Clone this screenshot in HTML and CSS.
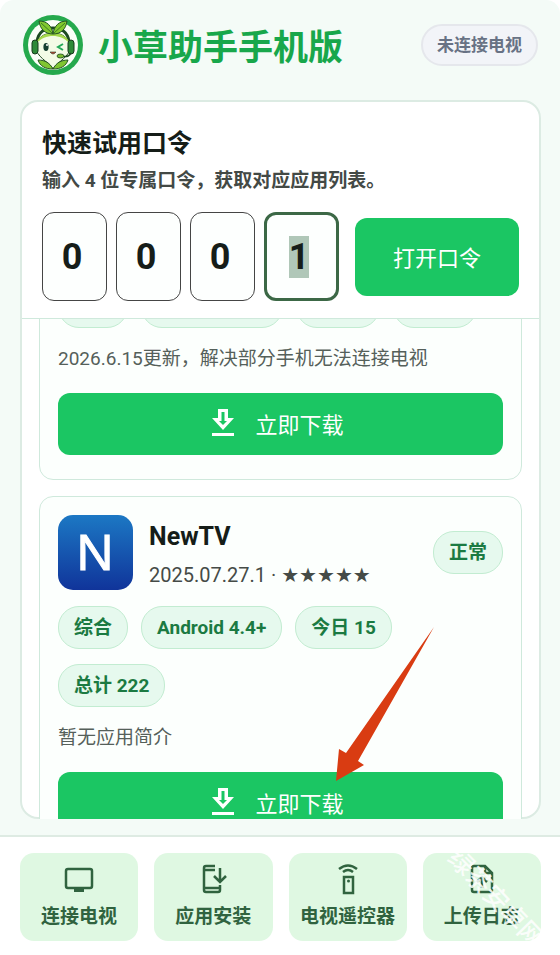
FILE: index.html
```html
<!DOCTYPE html>
<html lang="zh-CN">
<head>
    <meta charset="UTF-8">
    <meta name="viewport" content="width=device-width, initial-scale=1.0">
    <title>小草助手手机版</title>
    <link rel="stylesheet" href="styles.css">
    <script>
    document.addEventListener('DOMContentLoaded', function() {
        var activeInput = document.getElementById('code4');
        activeInput.focus();
        activeInput.select();
    });
    </script>
</head>
<body>
    <div class="app">
        <header class="topbar">
            <svg class="logo" viewBox="0 0 60 60" aria-hidden="true">
                <circle cx="30" cy="30" r="30" fill="#25a94d"/>
                <circle cx="30" cy="30" r="25" fill="#fbfff8"/>
                <path d="M14 27C15 17 22 13 30 13s15 4 16 14" fill="none" stroke="#1d4a22" stroke-width="3"/>
                <path d="M30 18C20 18 13 24 13 32c0 10 12 14 17 22 5-8 17-12 17-22 0-8-7-14-17-14z" fill="#f3fbe6" stroke="#234d23" stroke-width="1"/>
                <path d="M30 18c-9 0-15 4-17 11 5-6 11-8 17-8s12 2 17 8c-2-7-8-11-17-11z" fill="#a5d84d"/>
                <rect x="9" y="25" width="6" height="14" rx="3" fill="#2e8a38" stroke="#173b1d"/>
                <rect x="45" y="25" width="6" height="14" rx="3" fill="#2e8a38" stroke="#173b1d"/>
                <path d="M30 19C29 11 24 6 16 6c1 8 6 13 14 13z" fill="#82c92f" stroke="#245323"/>
                <path d="M30 19C31 11 36 6 44 6c-1 8-6 13-14 13z" fill="#82c92f" stroke="#245323"/>
                <path d="M18 8l11 10M42 8L31 18" stroke="#3c7c24" stroke-width="1"/>
                <path d="M30 54c-3-6-8-9-15-9 2 6 7 9 15 9zM30 54c3-6 8-9 15-9-2 6-7 9-15 9z" fill="#80c532" stroke="#245323"/>
                <ellipse cx="23" cy="32" rx="2.6" ry="4" fill="#153e30"/>
                <circle cx="24" cy="30" r="1" fill="#fff"/>
                <path d="M40 29l-5 3 5 3" fill="none" stroke="#24a858" stroke-width="2"/>
                <path d="M27 37q3 4 6 0z" fill="#bf4b3a" stroke="#253b25" stroke-width=".6"/>
                <path d="M48 38q-3 5-9 3" fill="none" stroke="#1d4a22" stroke-width="1.5"/>
                <ellipse cx="37.500" cy="41" rx="3.500" ry="2" fill="#79bb30" stroke="#1d4a22" stroke-width=".8"/>
            </svg>
            <h1>小草助手手机版</h1>
            <span class="tv-status">未连接电视</span>
        </header>

        <main class="panel">
            <form class="code-form">
                <h2>快速试用口令</h2>
                <p>输入 4 位专属口令，获取对应应用列表。</p>
                <div class="code-row">
                    <input type="text" class="code-input" inputmode="numeric" maxlength="1" value="0" aria-label="口令第 1 位">
                    <input type="text" class="code-input" inputmode="numeric" maxlength="1" value="0" aria-label="口令第 2 位">
                    <input type="text" class="code-input" inputmode="numeric" maxlength="1" value="0" aria-label="口令第 3 位">
                    <input type="text" class="code-input active" id="code4" inputmode="numeric" maxlength="1" value="1" aria-label="口令第 4 位">
                    <button type="button" class="btn open-btn">打开口令</button>
                </div>
            </form>

            <div class="app-list">
                <article class="app-card scrolled">
                    <div class="tags">
                        <span class="tag"></span>
                        <span class="tag"></span>
                        <span class="tag"></span>
                        <span class="tag"></span>
                    </div>
                    <p class="desc">2026.6.15更新，解决部分手机无法连接电视</p>
                    <button type="button" class="btn download-btn">
                        <svg viewBox="0 0 24 28" aria-hidden="true"><path fill-rule="evenodd" d="M7 0h10v9h6L12 21 1 9h6zM10.500 3v9H8l4 4 4-4h-2.500V3zM1 24h22v3H1z"/></svg>
                        立即下载
                    </button>
                </article>

                <article class="app-card">
                    <div class="app-head">
                        <svg class="app-icon" viewBox="0 0 75 75" aria-hidden="true">
                            <defs>
                                <linearGradient id="iconBg" x1="0" y1="0" x2="0" y2="1">
                                    <stop offset="0" stop-color="#1c78c4"/>
                                    <stop offset="1" stop-color="#10349a"/>
                                </linearGradient>
                            </defs>
                            <rect width="75" height="75" rx="15" fill="url(#iconBg)"/>
                            <text class="icon-letter" x="37" y="55">N</text>
                        </svg>
                        <div class="app-info">
                            <h3>NewTV</h3>
                            <p>2025.07.27.1 · <span class="stars">★★★★★</span></p>
                        </div>
                        <span class="tag">正常</span>
                    </div>
                    <div class="tags">
                        <span class="tag">综合</span>
                        <span class="tag">Android 4.4+</span>
                        <span class="tag">今日 15</span>
                        <span class="tag">总计 222</span>
                    </div>
                    <p class="desc">暂无应用简介</p>
                    <button type="button" class="btn download-btn">
                        <svg viewBox="0 0 24 28" aria-hidden="true"><path fill-rule="evenodd" d="M7 0h10v9h6L12 21 1 9h6zM10.500 3v9H8l4 4 4-4h-2.500V3zM1 24h22v3H1z"/></svg>
                        立即下载
                    </button>
                </article>
            </div>
        </main>

        <nav class="bottom-nav">
            <button type="button" class="nav-btn">
                <svg viewBox="0 0 32 32" aria-hidden="true">
                    <rect x="3" y="6" width="26" height="19" rx="2"/>
                    <path class="solid" d="M11 25h10v4H11z"/>
                </svg>
                连接电视
            </button>
            <button type="button" class="nav-btn">
                <svg viewBox="0 0 32 32" aria-hidden="true">
                    <path d="M18 3H9a2 2 0 0 0-2 2v22a2 2 0 0 0 2 2h12a2 2 0 0 0 2-2v-5M7 7h11M7 25h16M23 5v13M17 13l6 6 6-6"/>
                </svg>
                应用安装
            </button>
            <button type="button" class="nav-btn">
                <svg viewBox="0 0 32 32" aria-hidden="true">
                    <rect x="12" y="14" width="9" height="16"/>
                    <path d="M7 6q9-7 18 0M11 9q5-4 10 0"/>
                    <circle class="solid" cx="16.500" cy="18" r="1.500"/>
                </svg>
                电视遥控器
            </button>
            <button type="button" class="nav-btn">
                <svg viewBox="0 0 32 32" aria-hidden="true">
                    <path d="M19 3H8a2 2 0 0 0-2 2v22a2 2 0 0 0 2 2h16a2 2 0 0 0 2-2V10zM19 3v7h7M16 25V14M11 19l5-5 5 5"/>
                </svg>
                上传日志
            </button>
            <span class="watermark">绿茶安卓网</span>
        </nav>

        <svg class="pointer" viewBox="0 0 100 156" aria-hidden="true">
            <path d="M99 1L11 127 4 123 1 155 29 139 23 135z"/>
        </svg>
    </div>
</body>
</html>
```

FILE: styles.css
```css
* {
    margin: 0;
    padding: 0;
    box-sizing: border-box;
}

body, button, input {
    font-family: Roboto, 'Noto Sans CJK SC', sans-serif;
}

body {
    background-color: #fff;
    color: #151d18;
}

.app {
    position: relative;
    display: flex;
    flex-direction: column;
    height: 100vh;
    overflow: hidden;
    background-color: #f4fbf7;
    border-radius: 14px 14px 0 0;
}

/* top bar */
.topbar {
    display: flex;
    align-items: center;
    gap: 15px;
    padding: 15px 22px 25px 23px;
}

.logo {
    width: 60px;
    height: 60px;
}

h1 {
    flex: 1;
    padding-top: 8px;
    font-size: 35px;
    line-height: 40px;
    font-weight: 700;
    color: #18a74b;
}

.tv-status {
    padding: 0 14px;
    border: 2px solid #e5e7ec;
    border-radius: 21px;
    background-color: #f2f4f8;
    color: #687284;
    font-size: 17px;
    line-height: 38px;
    font-weight: 700;
}

/* main panel */
.panel {
    flex: 1;
    min-height: 0;
    display: flex;
    flex-direction: column;
    margin: 0 19px 16px 20px;
    background-color: #fff;
    border: 2px solid #dcebe3;
    border-radius: 18px;
}

.code-form {
    padding: 23px 20px 17px;
    border-bottom: 1px solid #cfe9dc;
}

h2 {
    font-size: 25px;
    line-height: 38px;
    font-weight: 700;
}

.code-form p {
    margin-bottom: 13px;
    color: #434945;
    font-size: 19px;
    line-height: 36px;
    font-weight: 700;
}

.code-row {
    display: flex;
    align-items: center;
    gap: 9px;
}

.code-input {
    width: 65px;
    height: 89px;
    padding-right: 5px;
    border: 1px solid #454545;
    border-radius: 12px;
    background-color: #fdfffe;
    color: #161d19;
    font-size: 36px;
    font-weight: 700;
    text-align: center;
    outline: none;
    caret-color: transparent;
}

.code-input.active {
    width: 75px;
    border: 3px solid #3c6846;
}

.code-input::selection {
    background-color: #b0c7b8;
    color: #161d19;
}

.btn {
    padding-bottom: 2px;
    border: none;
    border-radius: 12px;
    background-color: #1bc663;
    color: #fff;
    font-size: 22px;
    font-weight: 400;
    cursor: pointer;
}

.open-btn {
    flex: 1;
    height: 78px;
    margin-left: 7px;
}

/* app list */
.app-list {
    flex: 1;
    min-height: 0;
    display: flex;
    flex-direction: column;
    gap: 16px;
    margin-bottom: -2px;
    padding: 0 17px;
    overflow: hidden;
}

.app-card {
    flex-shrink: 0;
    padding: 18px 18px 24px;
    border: 1px solid #cfe9dc;
    border-radius: 14px;
    background-color: #fcfffd;
}

.app-card.scrolled {
    margin-top: -52px;
}

.app-head {
    display: flex;
    align-items: center;
    gap: 16px;
    height: 75px;
    margin-bottom: 16px;
}

.app-icon {
    width: 75px;
    height: 75px;
}

.icon-letter {
    font-family: 'Noto Sans', 'Open Sans', sans-serif;
    font-size: 50px;
    text-anchor: middle;
    fill: #fff;
    stroke: #fff;
    stroke-width: 1;
}

.app-info {
    flex: 1;
    padding-top: 6px;
}

h3 {
    font-size: 25px;
    line-height: 38px;
    font-weight: 700;
}

.app-info p {
    color: #454b47;
    font-size: 20px;
    line-height: 38px;
}

.stars {
    font-family: 'DejaVu Sans', sans-serif;
}

.tags {
    display: flex;
    flex-wrap: wrap;
    gap: 15px 13px;
}

.tag {
    min-height: 42px;
    padding: 0 15px;
    border: 1px solid #c2ecd1;
    border-radius: 21px;
    background-color: #e6f9ee;
    color: #1b7a42;
    font-size: 19px;
    line-height: 41px;
    font-weight: 700;
}

.scrolled .tag {
    flex: 0 0 84px;
}

.scrolled .tag:first-child {
    flex-basis: 70px;
}

.scrolled .tag:nth-child(2) {
    flex-basis: 142px;
}

.desc {
    margin: 17px 0 20px;
    color: #55605a;
    font-size: 19px;
    line-height: 28px;
}

.download-btn {
    display: flex;
    align-items: center;
    justify-content: center;
    gap: 20px;
    width: 100%;
    height: 62px;
    padding-right: 6px;
}

.download-btn svg {
    width: 24px;
    height: 28px;
    fill: #fff;
}

/* bottom navigation */
.bottom-nav {
    position: relative;
    display: grid;
    grid-template-columns: repeat(4, 1fr);
    gap: 16px;
    padding: 16px 19px 14px 20px;
    border-top: 2px solid #deebe3;
    background-color: #fff;
}

.nav-btn {
    display: flex;
    flex-direction: column;
    align-items: center;
    justify-content: center;
    gap: 8px;
    height: 88px;
    border: none;
    border-radius: 14px;
    background-color: #dff8e2;
    color: #30633f;
    font-size: 19px;
    line-height: 28px;
    font-weight: 700;
    cursor: pointer;
}

.nav-btn svg {
    width: 32px;
    height: 32px;
    fill: none;
    stroke: #30633f;
    stroke-width: 2.5;
}

.nav-btn .solid {
    fill: #30633f;
    stroke: none;
}

.watermark {
    position: absolute;
    right: 2px;
    top: 44px;
    color: rgba(255, 255, 255, 0.85);
    font-size: 25px;
    line-height: 36px;
    font-weight: 500;
    transform: rotate(46deg);
    pointer-events: none;
}

.pointer {
    position: absolute;
    right: 125px;
    bottom: 173px;
    width: 100px;
    height: 156px;
    fill: #d93c12;
    pointer-events: none;
}
```
